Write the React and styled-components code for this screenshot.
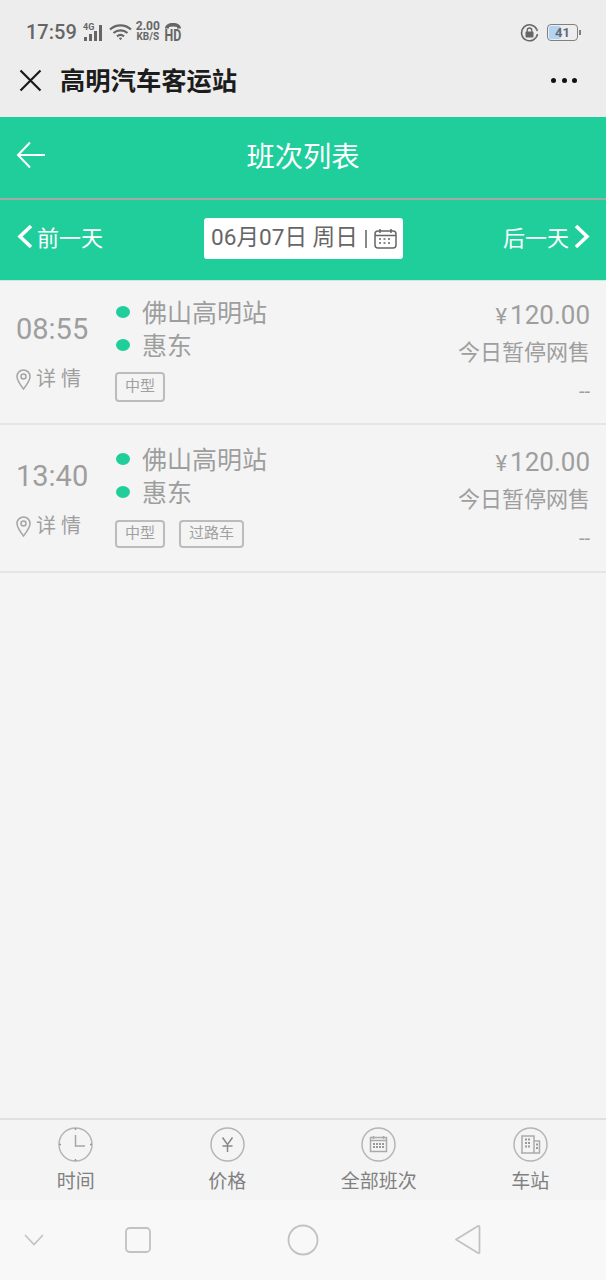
import React from 'react';
import styled, { createGlobalStyle } from 'styled-components';

const GREEN = '#20ce9c';
const CJK = 'Roboto, "Noto Sans CJK SC", sans-serif';

const GlobalStyle = createGlobalStyle`
  html, body { margin: 0; padding: 0; background: #f4f4f4; }
  body { font-family: ${CJK}; }
  * { box-sizing: border-box; }
`;

const Page = styled.div`
  width: 606px;
  height: 1280px;
  display: flex;
  flex-direction: column;
  background: #f4f4f4;
  overflow: hidden;
`;

const TopArea = styled.div`
  height: 117px;
  background: #ededed;
  display: flex;
  flex-direction: column;
`;

const StatusBar = styled.div`
  height: 50px;
  padding: 14px 26px 0 26px;
  display: flex;
  align-items: center;
  justify-content: space-between;
  color: #666;
`;

const StatusGroup = styled.div`
  display: flex;
  align-items: center;
  gap: ${p => p.$gap || 4}px;
`;

const Clock = styled.span`
  font-size: 20px;
  font-weight: 500;
  margin-right: 2px;
`;

const Speed = styled.div`
  display: flex;
  flex-direction: column;
  align-items: center;
  font-size: 12px;
  line-height: 11px;
  font-weight: 700;
  font-family: Roboto, sans-serif;
  margin-top: -1px;
  span + span { font-size: 10px; line-height: 10px; }
`;

const HdWrap = styled.div`
  display: flex;
  flex-direction: column;
  align-items: center;
  width: 18px;
`;

const HdText = styled.span`
  font-size: 13px;
  line-height: 14px;
  font-weight: 700;
  font-family: Roboto, sans-serif;
  transform: scale(0.95, 1.2);
`;

const Battery = styled.div`
  width: 31px;
  height: 17px;
  border: 1px solid #808080;
  border-radius: 4px;
  padding: 1px;
  position: relative;
  margin-right: 2px;
  &::before {
    content: '';
    display: block;
    height: 100%;
    width: 45%;
    background: #b1d4f2;
    border-radius: 2px;
  }
  &::after {
    content: '';
    position: absolute;
    right: -4px;
    top: 5px;
    width: 2px;
    height: 5px;
    background: #808080;
  }
`;

const BatteryLevel = styled.span`
  position: absolute;
  left: 0;
  right: 0;
  top: -1px;
  text-align: center;
  font-size: 13px;
  line-height: 17px;
  font-weight: 700;
  color: #5f6b78;
`;

const TitleBar = styled.div`
  flex: 1;
  display: flex;
  align-items: center;
  padding: 0 29px 6px 19px;
`;

const PageTitle = styled.div`
  flex: 1;
  margin-left: 18px;
  padding-bottom: 3px;
  font-size: 25.3px;
  font-weight: 700;
  color: #1c1c1c;
`;

const Dots = styled.div`
  display: flex;
  gap: 5.5px;
  i {
    width: 5px;
    height: 5px;
    border-radius: 50%;
    background: #111;
  }
`;

const Header = styled.div`
  height: 83px;
  background: ${GREEN};
  display: flex;
  align-items: center;
  padding: 0 16px 5px;
  border-bottom: 2px solid #a2a9a6;
`;

const HeaderTitle = styled.div`
  flex: 1;
  text-align: center;
  margin-right: 30px;
  padding-bottom: 2px;
  font-size: 28.3px;
  color: #fff;
`;

const DateBar = styled.div`
  height: 81px;
  background: ${GREEN};
  display: flex;
  align-items: center;
  justify-content: space-between;
  padding: 0 16px 3px 17px;
  border-bottom: 1px solid #c8ece0;
`;

const DayLink = styled.div`
  display: flex;
  align-items: center;
  justify-content: ${p => (p.$right ? 'flex-end' : 'flex-start')};
  color: #fff;
  font-size: 22px;
  gap: ${p => (p.$right ? 5 : 4)}px;
  width: 88px;
  margin-bottom: 4px;
`;

const RaisedText = styled.span`
  padding-bottom: ${p => p.$lift}px;
`;

const DateBox = styled.div`
  width: 199px;
  height: 41px;
  background: #fff;
  border-radius: 3px;
  display: flex;
  align-items: center;
  padding-left: 7px;
  color: #666;
  font-size: 22.6px;
  white-space: nowrap;
`;

const DateSep = styled.span`
  width: 2px;
  height: 18px;
  background: #888;
  margin: 0 7px;
`;

const Trip = styled.div`
  height: ${p => p.$height}px;
  display: flex;
  border-bottom: 2px solid #e5e5e5;
  padding: 0 16px;
  color: #9e9e9e;
`;

const TimeCol = styled.div`
  width: 99px;
  display: flex;
  flex-direction: column;
`;

const Time = styled.div`
  font-size: 29px;
  line-height: 34px;
  margin-top: ${p => p.$top}px;
`;

const Detail = styled.div`
  display: flex;
  align-items: center;
  gap: 5px;
  margin-top: 18px;
  font-size: 20px;
  line-height: 30px;
`;

const RouteCol = styled.div`
  flex: 1;
  display: flex;
  flex-direction: column;
  padding-top: ${p => p.$top}px;
`;

const Stop = styled.div`
  display: flex;
  align-items: center;
  height: 33px;
  font-size: 25px;
  padding-left: 1px;
`;

const Dot = styled.i`
  width: 14px;
  height: 12px;
  border-radius: 50%;
  background: ${GREEN};
  margin: 3px 12px 0 0;
`;

const Tags = styled.div`
  display: flex;
  gap: 14px;
  margin-top: ${p => p.$top}px;
`;

const Tag = styled.span`
  height: ${p => p.$height}px;
  line-height: ${p => p.$height - 6}px;
  padding: 0 8px;
  border: 2px solid #bcbcbc;
  border-radius: 4px;
  font-size: 15px;
  color: #a0a0a0;
`;

const PriceCol = styled.div`
  display: flex;
  flex-direction: column;
  align-items: flex-end;
  padding-top: ${p => p.$top}px;
`;

const Price = styled.div`
  font-size: 26px;
  line-height: 36px;
  small { font-size: 22px; margin-right: 3px; }
`;

const Sale = styled.div`
  font-size: 22px;
  line-height: 34px;
  margin-top: 1px;
`;

const Dash = styled.div`
  font-size: 20px;
  line-height: 28px;
  margin-top: 7px;
`;

const Spacer = styled.div`
  flex: 1;
`;

const Footer = styled.div`
  height: 82px;
  border-top: 2px solid #e0e0e0;
  display: grid;
  grid-template-columns: repeat(4, 1fr);
  background: #f4f4f4;
`;

const FootItem = styled.div`
  display: flex;
  flex-direction: column;
  align-items: center;
  padding-top: 7px;
  color: #808080;
  font-size: 19px;
  line-height: 28px;
  gap: 6px;
`;

const NavBar = styled.div`
  height: 80px;
  background: #f8f8f8;
  display: flex;
  align-items: center;
  padding-bottom: 1px;
`;

const NavSlot = styled.div`
  width: ${p => p.$w}px;
  display: flex;
  justify-content: center;
`;

const Signal = () => (
  <svg width="22" height="19" viewBox="0 0 22 19" fill="#666">
    <text x="0" y="7" fontSize="9" fontWeight="700" fontFamily="Roboto">4G</text>
    <rect x="1" y="14" width="3" height="4" />
    <rect x="6" y="11" width="3" height="7" />
    <rect x="11" y="8" width="3" height="10" />
    <rect x="16" y="2" width="3" height="16" />
  </svg>
);

const Wifi = () => (
  <svg width="23" height="18" viewBox="0 0 23 18" fill="none" stroke="#666" strokeWidth="2.2">
    <path d="M1 6.500c6-5.500 15-5.500 21 0" />
    <path d="M4.500 10c4-3.500 10-3.500 14 0" />
    <path d="M8 13.300c2-1.600 5-1.600 7 0" />
    <path d="M9.800 15.200l1.700 2 1.700-2a2.600 2.600 0 0 0-3.400 0z" fill="#666" stroke="none" />
  </svg>
);

const HdCall = () => (
  <HdWrap>
    <svg width="18" height="7" viewBox="0 0 18 7" fill="#666">
      <path d="M1 6.500C1 3 4.500 1 9 1s8 2 8 5.500h-4V5c-2.500-.8-5.500-.8-8 0v1.500z" />
    </svg>
    <HdText>HD</HdText>
  </HdWrap>
);

const RotationLock = () => (
  <svg width="19" height="19" viewBox="0 0 19 19" fill="none" stroke="#666" strokeWidth="1.600">
    <path d="M17.500 11a8 8 0 1 1-.6-4.500" />
    <path d="M15.500 6.500h3l-1.500 2z" fill="#666" stroke="none" />
    <rect x="5.500" y="8.500" width="8" height="6" rx="1" fill="#666" stroke="none" />
    <path d="M7.200 9V7.300a2.300 2.300 0 0 1 4.600 0V9" strokeWidth="1.300" />
  </svg>
);

const CloseIcon = () => (
  <svg width="23" height="23" viewBox="0 0 23 23" stroke="#1a1a1a" strokeWidth="2.200" fill="none">
    <path d="M1.500 1.500l20 20M21.500 1.500l-20 20" />
  </svg>
);

const BackArrow = () => (
  <svg width="30" height="28" viewBox="0 0 30 28" stroke="#fff" strokeWidth="2" fill="none">
    <path d="M29 14H2M14 1.500L2 14l12 12.500" />
  </svg>
);

const Chevron = ({ right }) => (
  <svg width="16" height="25" viewBox="0 0 16 25" stroke="#fff" strokeWidth="3.600" fill="none">
    <path d={right ? 'M2 2l11 10.500L2 23' : 'M14 2L3 12.500 14 23'} />
  </svg>
);

const CalendarIcon = () => (
  <svg width="23" height="21" viewBox="0 0 23 21" fill="none" stroke="#666" strokeWidth="1.500">
    <rect x="1" y="3" width="21" height="17" rx="3" />
    <path d="M1 7.500h21M6 1v4M17 1v4" />
    <path d="M5 11h13M5 15h13" strokeDasharray="2 2.500" />
  </svg>
);

const PinIcon = () => (
  <svg width="15" height="21" viewBox="0 0 15 21" fill="none" stroke="#a5a5a5" strokeWidth="1.500">
    <path d="M7.500 20C4 15.500 1 11.500 1 7.500a6.500 6.500 0 0 1 13 0c0 4-3 8-6.500 12.500z" />
    <circle cx="7.500" cy="7.500" r="2.500" />
  </svg>
);

const ClockIcon = () => (
  <svg width="35" height="35" viewBox="0 0 35 35" fill="none" stroke="#b5b5b5" strokeWidth="1.500">
    <circle cx="17.500" cy="17.500" r="16.500" />
    <path d="M17.500 8v11H27" stroke="#a5a5a5" />
    <path d="M17.500 1v2M17.500 32v2M1 17.500h2M32 17.500h2" stroke="#999" />
  </svg>
);

const YuanIcon = () => (
  <svg width="35" height="35" viewBox="0 0 35 35" fill="none" stroke="#b5b5b5" strokeWidth="1.500">
    <circle cx="17.500" cy="17.500" r="16.500" />
    <path d="M12.500 10.500l5 7 5-7M17.500 17.500V25M12.500 19h10" stroke="#888" />
  </svg>
);

const ScheduleIcon = () => (
  <svg width="35" height="35" viewBox="0 0 35 35" fill="none" stroke="#b5b5b5" strokeWidth="1.500">
    <circle cx="17.500" cy="17.500" r="16.500" />
    <rect x="9.500" y="10.500" width="16" height="14" stroke="#aaa" />
    <path d="M9.500 13.500h16M12.500 9v3M22.500 9v3" stroke="#aaa" />
    <path d="M12 17h11M12 20h11" stroke="#999" strokeWidth="2" strokeDasharray="2 1" />
  </svg>
);

const StationIcon = () => (
  <svg width="35" height="35" viewBox="0 0 35 35" fill="none" stroke="#b5b5b5" strokeWidth="1.500">
    <circle cx="17.500" cy="17.500" r="16.500" />
    <path d="M9 26V9h12v17M21 14h5.500v12H8" stroke="#aaa" />
    <path d="M12 12.500h6M12 16h6M12 19.500h6M23 17.500h2M23 21h2" stroke="#999" strokeWidth="2" strokeDasharray="2 1" />
  </svg>
);

const NavChevron = () => (
  <svg width="20" height="12" viewBox="0 0 20 12" fill="none" stroke="#c2c2c2" strokeWidth="1.600">
    <path d="M1 1l9 9.500L19 1" />
  </svg>
);

const NavSquare = () => (
  <svg width="26" height="26" viewBox="0 0 26 26" fill="none" stroke="#c2c2c2" strokeWidth="1.800">
    <rect x="1" y="1" width="24" height="24" rx="3.500" />
  </svg>
);

const NavCircle = () => (
  <svg width="32" height="32" viewBox="0 0 32 32" fill="none" stroke="#c2c2c2" strokeWidth="1.800">
    <circle cx="16" cy="16" r="14.500" />
  </svg>
);

const NavBack = () => (
  <svg width="27" height="31" viewBox="0 0 27 31" fill="none" stroke="#c2c2c2" strokeWidth="1.800" strokeLinejoin="round">
    <path d="M2 15.500L24 2c1-.5 1.500 0 1.500 1v25c0 1-.5 1.500-1.500 1z" />
  </svg>
);

const trips = [
  { time: '08:55', height: 144, timeTop: 31, routeTop: 13, tagTop: 12, tagHeight: 30, priceTop: 16, tags: ['中型'] },
  { time: '13:40', height: 148, timeTop: 34, routeTop: 16, tagTop: 13, tagHeight: 28, priceTop: 19, tags: ['中型', '过路车'] },
];

const tabs = [
  { label: '时间', Icon: ClockIcon },
  { label: '价格', Icon: YuanIcon },
  { label: '全部班次', Icon: ScheduleIcon },
  { label: '车站', Icon: StationIcon },
];

export default function App() {
  return (
    <Page>
      <GlobalStyle />
      <TopArea>
        <StatusBar>
          <StatusGroup $gap={4}>
            <Clock>17:59</Clock>
            <Signal />
            <Wifi />
            <Speed>
              <span>2.00</span>
              <span>KB/S</span>
            </Speed>
            <HdCall />
          </StatusGroup>
          <StatusGroup $gap={8}>
            <RotationLock />
            <Battery>
              <BatteryLevel>41</BatteryLevel>
            </Battery>
          </StatusGroup>
        </StatusBar>
        <TitleBar>
          <CloseIcon />
          <PageTitle>高明汽车客运站</PageTitle>
          <Dots><i /><i /><i /></Dots>
        </TitleBar>
      </TopArea>

      <Header>
        <BackArrow />
        <HeaderTitle>班次列表</HeaderTitle>
      </Header>

      <DateBar>
        <DayLink>
          <Chevron />
          <RaisedText $lift={2}>前一天</RaisedText>
        </DayLink>
        <DateBox>
          <RaisedText $lift={6}>06月07日 周日</RaisedText>
          <DateSep />
          <CalendarIcon />
        </DateBox>
        <DayLink $right>
          <RaisedText $lift={2}>后一天</RaisedText>
          <Chevron right />
        </DayLink>
      </DateBar>

      {trips.map(t => (
        <Trip key={t.time} $height={t.height}>
          <TimeCol>
            <Time $top={t.timeTop}>{t.time}</Time>
            <Detail>
              <PinIcon />
              详 情
            </Detail>
          </TimeCol>
          <RouteCol $top={t.routeTop}>
            <Stop><Dot />佛山高明站</Stop>
            <Stop><Dot />惠东</Stop>
            <Tags $top={t.tagTop}>
              {t.tags.map(tag => <Tag key={tag} $height={t.tagHeight}>{tag}</Tag>)}
            </Tags>
          </RouteCol>
          <PriceCol $top={t.priceTop}>
            <Price><small>¥</small>120.00</Price>
            <Sale>今日暂停网售</Sale>
            <Dash>--</Dash>
          </PriceCol>
        </Trip>
      ))}

      <Spacer />

      <Footer>
        {tabs.map(({ label, Icon }) => (
          <FootItem key={label}>
            <Icon />
            {label}
          </FootItem>
        ))}
      </Footer>

      <NavBar>
        <NavSlot $w={68}><NavChevron /></NavSlot>
        <NavSlot $w={140}><NavSquare /></NavSlot>
        <NavSlot $w={190}><NavCircle /></NavSlot>
        <NavSlot $w={138}><NavBack /></NavSlot>
      </NavBar>
    </Page>
  );
}
